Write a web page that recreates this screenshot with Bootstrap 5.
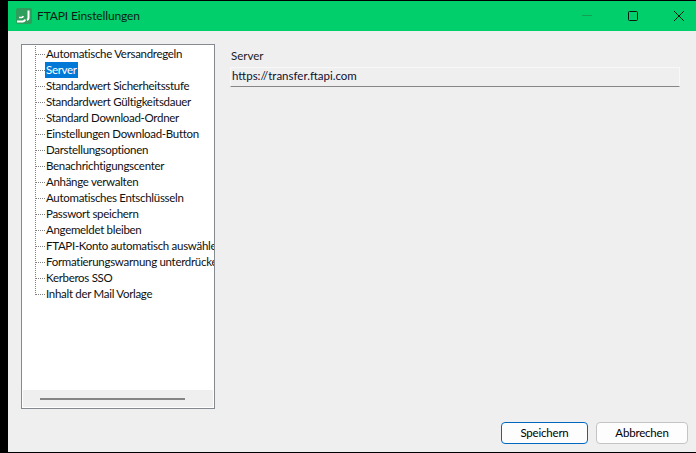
<!DOCTYPE html>
<html lang="de">
<head>
<meta charset="utf-8">
<title>FTAPI Einstellungen</title>
<link href="https://cdn.jsdelivr.net/npm/bootstrap@5.3.0/dist/css/bootstrap.min.css" rel="stylesheet">
<style>
html,body{height:100%;}
body{background:#000;font-family:Lato,"Liberation Sans",sans-serif;font-size:11.5px;color:#000;overflow:hidden;}
.win-frame{width:696px;height:453px;padding:1px 0 1px 8px;}
.win-inner{background:#efefef;height:100%;}
.title-strip{height:30px;background:#00cf6b;padding-left:8px;flex:none;}
.title-text{font-size:12px;letter-spacing:-.13px;margin-left:5px;color:#0c1c14;}
.win-btn{width:46px;height:30px;}
.win-btn-end{width:40px;height:30px;}
.win-body{height:391px;padding:13px 13px 0 13px;}
.tree-box{width:194px;height:365px;border:1px solid #848a90;background:#fff;flex:none;}
.tree-list{height:345px;padding:1px 0 0 13px;overflow:hidden;}
.tree-item{height:16px;white-space:nowrap;background:repeating-linear-gradient(#808080 0 1px,transparent 1px 2px) 0 0/1px 100% no-repeat;}
.tree-item:last-child{background-size:1px 50%;}
.tree-dash{width:10px;flex:none;border-top:1px dotted #808080;}
.tree-label{padding:0 1px;line-height:16px;letter-spacing:-.3px;color:#101010;}
.tree-sel{background:#0078d7;color:#fff;}
.tree-scroll{height:17px;background:#efefef;margin:0 1px 1px;padding:0 0 0 17px;}
.tree-thumb{width:145px;height:2px;background:#858585;}
.field-pane{width:450px;margin-left:15px;}
.field-label{line-height:16px;margin:4px 0 3px 1px;color:#222;}
.field-value{height:20px;line-height:16px;padding:0 1px;background:#efefef;border-top:1px solid #f8f8f8;border-right:1px solid #f8f8f8;border-left:1px solid #f8f8f8;border-bottom:1px solid #868686;color:#101030;}
.foot-row{padding-right:8px;gap:8px;}
.act-btn{height:22px;padding:0;font-size:11.5px;letter-spacing:-.2px;line-height:18px;color:#000;background:#fdfdfd;border:1px solid #c4c4c4;border-radius:4px;}
.act-save{width:87px;border-color:#0067c0;}
.act-cancel{width:92px;}
</style>
</head>
<body>
<div class="win-frame">
  <div class="win-inner d-flex flex-column">
    <div class="title-strip d-flex align-items-center">
      <svg width="16" height="16" viewBox="0 0 16 16" aria-hidden="true">
        <rect width="16" height="16" rx="2" fill="#2f9e5c"/>
        <path d="M1 13.500h5.500c1.500 0 2.200-.7 2.500-2" fill="none" stroke="#fff" stroke-width="2"/>
        <path d="M3 9.500h2.500c1 0 1.500-.5 1.700-1.500" fill="none" stroke="#fff" stroke-width="1.600"/>
        <path d="M12.500 2.500V10c0 1-.5 1.500-1.500 2" fill="none" stroke="#fff" stroke-width="2"/>
      </svg>
      <span class="title-text">FTAPI Einstellungen</span>
      <div class="d-flex ms-auto">
        <svg class="win-btn" viewBox="0 0 46 30" aria-hidden="true"><path d="M18 14.500h10" stroke="#16a055" fill="none"/></svg>
        <svg class="win-btn" viewBox="0 0 46 30" aria-hidden="true"><rect x="18.500" y="10.500" width="9" height="9" rx="1" fill="none" stroke="#0a1a12"/></svg>
        <svg class="win-btn-end" viewBox="0 0 40 30" aria-hidden="true"><path d="M18 10l10 10M28 10L18 20" stroke="#0a1a12" fill="none"/></svg>
      </div>
    </div>
    <div class="win-body d-flex">
      <div class="tree-box d-flex flex-column">
        <ul class="tree-list list-unstyled mb-0">
          <li class="tree-item d-flex align-items-center"><span class="tree-dash"></span><span class="tree-label">Automatische Versandregeln</span></li>
          <li class="tree-item d-flex align-items-center"><span class="tree-dash"></span><span class="tree-label tree-sel">Server</span></li>
          <li class="tree-item d-flex align-items-center"><span class="tree-dash"></span><span class="tree-label">Standardwert Sicherheitsstufe</span></li>
          <li class="tree-item d-flex align-items-center"><span class="tree-dash"></span><span class="tree-label">Standardwert Gültigkeitsdauer</span></li>
          <li class="tree-item d-flex align-items-center"><span class="tree-dash"></span><span class="tree-label">Standard Download-Ordner</span></li>
          <li class="tree-item d-flex align-items-center"><span class="tree-dash"></span><span class="tree-label">Einstellungen Download-Button</span></li>
          <li class="tree-item d-flex align-items-center"><span class="tree-dash"></span><span class="tree-label">Darstellungsoptionen</span></li>
          <li class="tree-item d-flex align-items-center"><span class="tree-dash"></span><span class="tree-label">Benachrichtigungscenter</span></li>
          <li class="tree-item d-flex align-items-center"><span class="tree-dash"></span><span class="tree-label">Anhänge verwalten</span></li>
          <li class="tree-item d-flex align-items-center"><span class="tree-dash"></span><span class="tree-label">Automatisches Entschlüsseln</span></li>
          <li class="tree-item d-flex align-items-center"><span class="tree-dash"></span><span class="tree-label">Passwort speichern</span></li>
          <li class="tree-item d-flex align-items-center"><span class="tree-dash"></span><span class="tree-label">Angemeldet bleiben</span></li>
          <li class="tree-item d-flex align-items-center"><span class="tree-dash"></span><span class="tree-label">FTAPI-Konto automatisch auswählen</span></li>
          <li class="tree-item d-flex align-items-center"><span class="tree-dash"></span><span class="tree-label">Formatierungswarnung unterdrücken</span></li>
          <li class="tree-item d-flex align-items-center"><span class="tree-dash"></span><span class="tree-label">Kerberos SSO</span></li>
          <li class="tree-item d-flex align-items-center"><span class="tree-dash"></span><span class="tree-label">Inhalt der Mail Vorlage</span></li>
        </ul>
        <div class="tree-scroll d-flex align-items-center"><div class="tree-thumb"></div></div>
      </div>
      <div class="field-pane">
        <div class="field-label">Server</div>
        <div class="field-value">https://transfer.ftapi.com</div>
      </div>
    </div>
    <div class="foot-row d-flex justify-content-end">
      <button type="button" class="btn act-btn act-save">Speichern</button>
      <button type="button" class="btn act-btn act-cancel">Abbrechen</button>
    </div>
  </div>
</div>
<script src="https://cdn.jsdelivr.net/npm/bootstrap@5.3.0/dist/js/bootstrap.bundle.min.js"></script>
</body>
</html>
